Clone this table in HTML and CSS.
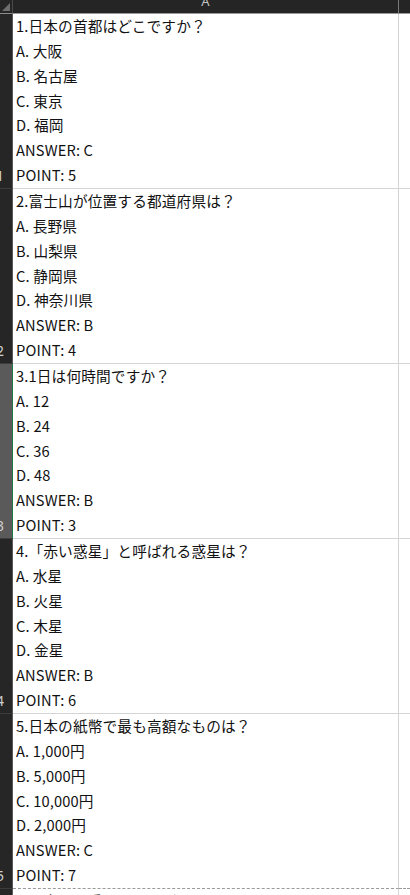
FILE: index.html
```html
<!DOCTYPE html>
<html lang="ja">
<head>
<meta charset="utf-8">
<title>Sheet</title>
<link rel="stylesheet" href="styles.css">
</head>
<body>
<div class="sheet">
  <div class="corner"><svg width="12" height="13" viewBox="0 0 12 13"><polygon points="10,3 10,11 2,11" fill="#6e6e6e"/></svg></div>
  <div class="colhead"><span class="collabel">A</span></div>
  <div class="colhead rest"></div>

  <div class="rowhead"><span class="rownum">1</span></div>
  <div class="cell">
    <div>1.日本の首都はどこですか？</div>
    <div>A. 大阪</div>
    <div>B. 名古屋</div>
    <div>C. 東京</div>
    <div>D. 福岡</div>
    <div>ANSWER: C</div>
    <div>POINT: 5</div>
  </div>
  <div class="blank"></div>

  <div class="rowhead"><span class="rownum">2</span></div>
  <div class="cell">
    <div>2.富士山が位置する都道府県は？</div>
    <div>A. 長野県</div>
    <div>B. 山梨県</div>
    <div>C. 静岡県</div>
    <div>D. 神奈川県</div>
    <div>ANSWER: B</div>
    <div>POINT: 4</div>
  </div>
  <div class="blank"></div>

  <div class="rowhead selected"><span class="rownum">3</span></div>
  <div class="cell">
    <div>3.1日は何時間ですか？</div>
    <div>A. 12</div>
    <div>B. 24</div>
    <div>C. 36</div>
    <div>D. 48</div>
    <div>ANSWER: B</div>
    <div>POINT: 3</div>
  </div>
  <div class="blank"></div>

  <div class="rowhead"><span class="rownum">4</span></div>
  <div class="cell">
    <div>4.「赤い惑星」と呼ばれる惑星は？</div>
    <div>A. 水星</div>
    <div>B. 火星</div>
    <div>C. 木星</div>
    <div>D. 金星</div>
    <div>ANSWER: B</div>
    <div>POINT: 6</div>
  </div>
  <div class="blank"></div>

  <div class="rowhead"><span class="rownum">5</span></div>
  <div class="cell pagebreak">
    <div>5.日本の紙幣で最も高額なものは？</div>
    <div>A. 1,000円</div>
    <div>B. 5,000円</div>
    <div>C. 10,000円</div>
    <div>D. 2,000円</div>
    <div>ANSWER: C</div>
    <div>POINT: 7</div>
  </div>
  <div class="blank pagebreak"></div>

  <div class="rowhead last"></div>
  <div class="cell last">
    <div>6.日本で一番長い川はどこですか？</div>
  </div>
  <div class="blank last"></div>
</div>
</body>
</html>
```
FILE: styles.css
```css
html, body {
  margin: 0;
  padding: 0;
  background: #ffffff;
}
body {
  width: 410px;
  height: 895px;
  overflow: hidden;
  font-family: "Noto Sans CJK JP", "Noto Sans", sans-serif;
  font-size: 14.67px;
  color: #111111;
}
.sheet {
  display: grid;
  grid-template-columns: 13px 386px 11px;
  grid-template-rows: 14px repeat(5, 175px) 1fr;
  height: 895px;
}
.corner {
  background: #252525;
  border-right: 1px solid #4a4a4a;
  border-bottom: 1px solid #8a8a8a;
  box-sizing: border-box;
  display: flex;
}
.colhead {
  background: #252525;
  border-bottom: 1px solid #9a9a9a;
  border-right: 1px solid #7a7a7a;
  box-sizing: border-box;
  overflow: hidden;
  text-align: center;
}
.colhead.rest {
  border-right: none;
}
.collabel {
  display: block;
  margin-top: -6px;
  line-height: 14px;
  color: #c4c4c4;
  font-family: "Noto Sans", sans-serif;
  font-size: 13px;
}
.rowhead {
  background: #262626;
  border-right: 1px solid #5a5a5a;
  border-bottom: 1px solid #3c3c3c;
  box-sizing: border-box;
  overflow: hidden;
  display: flex;
  align-items: flex-end;
}
.rowhead.selected {
  background: #5a5a5a;
  border-right: 1px solid #1f7a44;
}
.rowhead.last {
  border-bottom: none;
}
.rownum {
  display: block;
  margin-left: -4px;
  margin-bottom: 1px;
  line-height: 22px;
  color: #cfcfcf;
  font-family: "Noto Sans", sans-serif;
  font-size: 14px;
}
.cell {
  border-right: 1px solid #d4d4d4;
  border-bottom: 1px solid #d4d4d4;
  box-sizing: border-box;
  padding-left: 3px;
  line-height: 24.857px;
  overflow: hidden;
  white-space: nowrap;
  letter-spacing: 0.15px;
}
.blank {
  border-bottom: 1px solid #d4d4d4;
  box-sizing: border-box;
}
.pagebreak {
  border-bottom: 1px dashed #9a9a9a;
}
.cell.last, .blank.last {
  border-bottom: none;
}
```
